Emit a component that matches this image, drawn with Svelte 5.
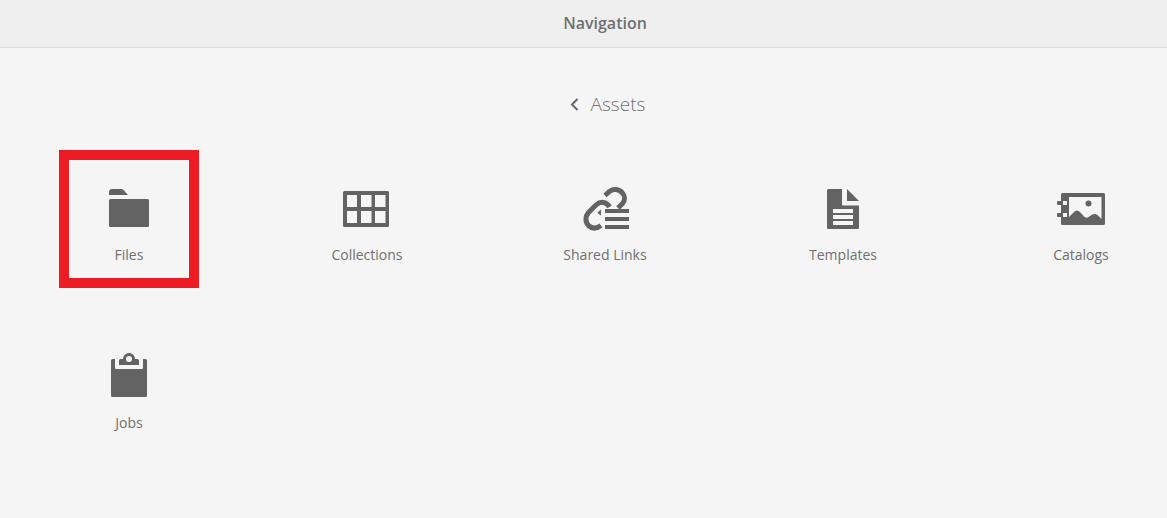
<script lang="ts">
	const items = [
		{ id: 'files', label: 'Files', selected: true },
		{ id: 'collections', label: 'Collections' },
		{ id: 'links', label: 'Shared Links' },
		{ id: 'templates', label: 'Templates' },
		{ id: 'catalogs', label: 'Catalogs' },
		{ id: 'jobs', label: 'Jobs' }
	];
</script>

<div class="shell">
	<header class="header">
		<h1>Navigation</h1>
	</header>

	<main>
		<h2 class="crumb">
			<a href="#navigation">
				<svg class="chevron" viewBox="0 0 10 14" aria-hidden="true">
					<path d="M8.500 2 3 7.500 8.500 13" />
				</svg>
				Assets
			</a>
		</h2>

		<nav class="grid" aria-label="Assets">
			{#each items as item}
				<a class="card" class:selected={item.selected} href={`#${item.id}`}>
					<svg class="icon" viewBox="0 0 48 48" aria-hidden="true">
						{#if item.id === 'files'}
							<path d="M4 10V7a3 3 0 0 1 3-3h9q1.500 0 2.500 1L23 10z" />
							<rect x="4" y="14" width="40" height="28" rx="1.500" />
						{:else if item.id === 'collections'}
							<path
								fill-rule="evenodd"
								d="M1.500 6h43A1.500 1.500 0 0 1 46 7.500v33a1.500 1.500 0 0 1-1.500 1.500h-43A1.500 1.500 0 0 1 0 40.500v-33A1.500 1.500 0 0 1 1.500 6zM4 10v12h10V10zM18 10v12h10.500V10zM32 10v12h10.500V10zM4 26v12h10V26zM18 26v12h10.500V26zM32 26v12h10.500V26z"
							/>
						{:else if item.id === 'links'}
							<path
								class="line"
								d="M24 10.500 28.500 6.500C32.500 3.500 38 4 41 7.500C44.500 11 44 15.500 41.500 18.500L37 23"
							/>
							<path
								class="line"
								d="M28.500 22C25.500 16.500 19.500 16 15 20L7.500 27.500C4 31.500 4 37.500 8 41C11.500 44 16 43.500 20 40.500"
							/>
							<path d="M20 24.500V30.500C18 29.500 16.500 28 16.500 27.500Z" />
							<path d="M24 24h24v4H24zM24 32h24v4H24zM24 40h24v4H24z" />
						{:else if item.id === 'templates'}
							<path
								fill-rule="evenodd"
								d="M9.500 4H23v15.500a1 1 0 0 0 1 1H40v22a1.500 1.500 0 0 1-1.500 1.500h-29A1.500 1.500 0 0 1 8 42.500v-37A1.500 1.500 0 0 1 9.500 4zM14 24v4h20v-4zM14 30v4h20v-4zM14 36v4h20v-4z"
							/>
							<path d="M28 4 40 16H28z" />
						{:else if item.id === 'catalogs'}
							<path
								fill-rule="evenodd"
								d="M5.500 8h41A1.500 1.500 0 0 1 48 9.500v29a1.500 1.500 0 0 1-1.500 1.500h-41A1.500 1.500 0 0 1 4 38.500V32h6v-4H4v-8h6v-4H4V9.500A1.500 1.500 0 0 1 5.500 8zM12 12v20L17 27q3-3 6 0l4 4.500q2 2 4.500.5l3-2q3-2 6 0L44.500 34V12z"
							/>
							<path d="M1 16h5v4H1a1 1 0 0 1-1-1v-2a1 1 0 0 1 1-1zM1 28h5v4H1a1 1 0 0 1-1-1v-2a1 1 0 0 1 1-1z" />
							<circle cx="31.500" cy="18.500" r="3" />
						{:else}
							<path
								d="M7.500 6H10v8.500a1.500 1.500 0 0 0 1.500 1.500h25a1.500 1.500 0 0 0 1.500-1.500V6h2.500A1.500 1.500 0 0 1 42 7.500v35a1.500 1.500 0 0 1-1.500 1.500h-33A1.500 1.500 0 0 1 6 42.500v-35A1.500 1.500 0 0 1 7.500 6z"
							/>
							<path
								fill-rule="evenodd"
								d="M15.500 6H18a6 6 0 0 1 12 0h2.500A1.500 1.500 0 0 1 34 7.500V12H14V7.500A1.500 1.500 0 0 1 15.500 6zM24 3a3 3 0 1 0 0 6a3 3 0 0 0 0-6z"
							/>
						{/if}
					</svg>
					<span>{item.label}</span>
				</a>
			{/each}
		</nav>
	</main>
</div>

<style>
	:global(body) {
		background: #f5f5f5;
		overflow-x: hidden;
	}

	.shell {
		min-width: 1210px;
		color: #707070;
		font-family: 'Open Sans', 'Noto Sans', sans-serif;
	}

	.header {
		padding: 11px 0 12px;
		background: #efefef;
		border-bottom: 1px solid #dedede;
		text-align: center;
	}

	h1 {
		margin: 0;
		font-size: 16px;
		line-height: 24px;
		font-weight: 600;
	}

	.crumb {
		margin: 0;
		padding: 40px 0 30px;
		font-size: 19px;
		line-height: 32px;
		font-weight: 300;
	}

	.crumb a {
		display: flex;
		align-items: center;
		justify-content: center;
		gap: 12px;
		padding-left: 4px;
		color: inherit;
		text-decoration: none;
	}

	.chevron {
		width: 10px;
		height: 14px;
		fill: none;
		stroke: #656565;
		stroke-width: 2;
	}

	.grid {
		display: grid;
		grid-template-columns: repeat(5, 1fr);
		gap: 30px 0;
		padding: 0 10px 30px;
		justify-items: center;
	}

	.card {
		box-sizing: border-box;
		width: 140px;
		padding: 25px 0 13px;
		border: 10px solid transparent;
		display: flex;
		flex-direction: column;
		align-items: center;
		gap: 12px;
		color: inherit;
		font-size: 14px;
		line-height: 20px;
		text-decoration: none;
		white-space: nowrap;
	}

	.card.selected {
		border-color: #ed1c24;
	}

	.icon {
		width: 48px;
		height: 48px;
		fill: #636363;
	}

	.line {
		fill: none;
		stroke: #636363;
		stroke-width: 5;
	}
</style>
